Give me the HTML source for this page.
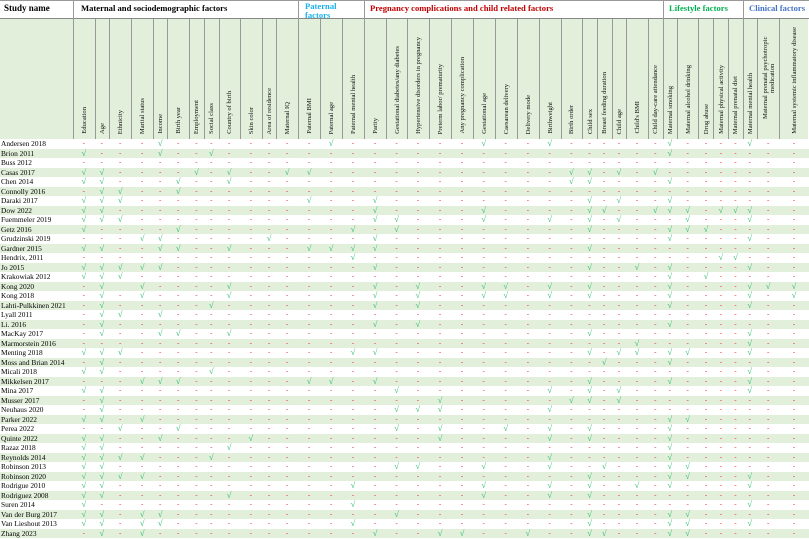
<!DOCTYPE html>
<html><head><meta charset="utf-8">
<style>
*{margin:0;padding:0;box-sizing:border-box}
body{width:809px;height:539px;overflow:hidden;background:#fff;font-family:"Liberation Serif",serif;position:relative;color:#000}
.top{position:absolute;left:0;top:0;width:809px;height:19px;border-top:1px solid #999;border-bottom:1px solid #888}
.g{position:absolute;top:1px;font-weight:bold;font-size:8.6px;line-height:8.6px}
.vl{position:absolute;top:0;width:1px;height:19px;background:#999}
.cols{position:absolute;left:0;top:19px;height:120px;width:809px}
.grid{display:grid;grid-template-columns:73px 21.7px 14.3px 22.4px 21.6px 14.4px 21.6px 15px 14.7px 21px 22.3px 14.4px 21.6px 22.4px 21.6px 22px 22.4px 20.6px 22px 22.4px 21.6px 21.7px 22.3px 22px 21.7px 21.7px 14.6px 14.7px 14.7px 21.6px 15px 14px 21.7px 15px 14.7px 14.6px 14px 22.7px 29px}
.cols>div{background:#e2efda;border-left:1px solid #999;height:120px;display:flex;align-items:flex-end;justify-content:center;padding-bottom:5px}
.cols>div:first-child{border-left:none}
.cols span{writing-mode:vertical-rl;transform:rotate(180deg);font-size:6.6px;line-height:7px;color:#111;text-align:center;max-height:112px}
.rows{position:absolute;left:0;top:139px;width:809px}
.r{height:9.5px;font-size:7.4px;line-height:9.5px}
.r:nth-child(even){background:#e2efda}
.r>*{display:block;text-align:center;font-style:normal;font-weight:normal;text-decoration:none}
.r>p{text-align:left;padding-left:1px;white-space:nowrap}
.r>i{color:#f03030;font-size:7px}
.r>b{color:#2dbb6a;font-size:8.5px;line-height:9px}
</style></head><body>
<div class="top">
<div class="g" style="left:4px;top:3px;font-size:9px">Study name</div>
<div class="g" style="left:81px;top:3px">Maternal and sociodemographic factors</div>
<div class="g" style="left:305px;color:#1ab0ee;line-height:8.6px">Paternal<br>factors</div>
<div class="g" style="left:370px;top:3px;color:#c00000">Pregnancy complications and child related factors</div>
<div class="g" style="left:669px;top:3px;color:#00b050">Lifestyle factors</div>
<div class="g" style="left:749px;top:3px;color:#4472c4">Clinical factors</div>
<div class="vl" style="left:73px"></div><div class="vl" style="left:298px"></div><div class="vl" style="left:364px"></div><div class="vl" style="left:663px"></div><div class="vl" style="left:743px"></div>
</div>
<div class="cols grid">
<div></div>
<div><span>Education</span></div><div><span>Age</span></div><div><span>Ethnicity</span></div><div><span>Marital status</span></div><div><span>Income</span></div><div><span>Birth year</span></div><div><span>Employment</span></div><div><span>Social class</span></div><div><span>Country of birth</span></div><div><span>Skin color</span></div><div><span>Area of residence</span></div><div><span>Maternal IQ</span></div><div><span>Paternal BMI</span></div><div><span>Paternal age</span></div><div><span>Paternal mental health</span></div><div><span>Parity</span></div><div><span>Gestational diabetes/any diabetes</span></div><div><span>Hypertensive disorders in pregnancy</span></div><div><span>Preterm labor/ prematurity</span></div><div><span>Any pregnancy complication</span></div><div><span>Gestational age</span></div><div><span>Caesarean delivery</span></div><div><span>Delivery mode</span></div><div><span>Birthweight</span></div><div><span>Birth order</span></div><div><span>Child sex</span></div><div><span>Breast feeding duration</span></div><div><span>Child age</span></div><div><span>Child's BMI</span></div><div><span>Child day-care attendance</span></div><div><span>Maternal smoking</span></div><div><span>Maternal alcohol drinking</span></div><div><span>Drug abuse</span></div><div><span>Maternal physical activity</span></div><div><span>Maternal prenatal diet</span></div><div><span>Maternal mental health</span></div><div><span>Maternal prenatal psychotropic medication</span></div><div><span>Maternal systemic inflammatory disease</span></div>
</div>
<div class="rows">
<div class="r grid"><p>Andersen 2018</p><i>-</i><i>-</i><i>-</i><i>-</i><b>√</b><i>-</i><i>-</i><i>-</i><i>-</i><i>-</i><i>-</i><i>-</i><i>-</i><b>√</b><i>-</i><i>-</i><i>-</i><i>-</i><i>-</i><i>-</i><b>√</b><i>-</i><i>-</i><b>√</b><i>-</i><i>-</i><i>-</i><i>-</i><i>-</i><i>-</i><b>√</b><i>-</i><i>-</i><i>-</i><i>-</i><b>√</b><i>-</i><i>-</i></div>
<div class="r grid"><p>Brion 2011</p><b>√</b><i>-</i><i>-</i><i>-</i><b>√</b><i>-</i><i>-</i><b>√</b><i>-</i><i>-</i><i>-</i><i>-</i><i>-</i><i>-</i><i>-</i><i>-</i><i>-</i><i>-</i><i>-</i><i>-</i><i>-</i><i>-</i><i>-</i><i>-</i><i>-</i><i>-</i><i>-</i><i>-</i><i>-</i><i>-</i><b>√</b><i>-</i><i>-</i><i>-</i><i>-</i><i>-</i><i>-</i><i>-</i></div>
<div class="r grid"><p>Buss 2012</p><i>-</i><i>-</i><i>-</i><i>-</i><i>-</i><i>-</i><i>-</i><i>-</i><i>-</i><i>-</i><i>-</i><i>-</i><i>-</i><i>-</i><i>-</i><i>-</i><i>-</i><i>-</i><i>-</i><i>-</i><i>-</i><i>-</i><i>-</i><i>-</i><i>-</i><i>-</i><i>-</i><i>-</i><i>-</i><i>-</i><i>-</i><i>-</i><i>-</i><i>-</i><i>-</i><i>-</i><i>-</i><i>-</i></div>
<div class="r grid"><p>Casas 2017</p><b>√</b><b>√</b><i>-</i><i>-</i><i>-</i><i>-</i><b>√</b><i>-</i><b>√</b><i>-</i><i>-</i><b>√</b><b>√</b><i>-</i><i>-</i><i>-</i><i>-</i><i>-</i><i>-</i><i>-</i><i>-</i><i>-</i><i>-</i><i>-</i><b>√</b><b>√</b><i>-</i><b>√</b><i>-</i><b>√</b><i>-</i><i>-</i><i>-</i><i>-</i><i>-</i><i>-</i><i>-</i><i>-</i></div>
<div class="r grid"><p>Chen 2014</p><b>√</b><b>√</b><i>-</i><i>-</i><i>-</i><b>√</b><i>-</i><i>-</i><b>√</b><i>-</i><i>-</i><i>-</i><i>-</i><i>-</i><i>-</i><i>-</i><i>-</i><i>-</i><i>-</i><i>-</i><i>-</i><i>-</i><i>-</i><i>-</i><b>√</b><b>√</b><i>-</i><i>-</i><i>-</i><i>-</i><b>√</b><i>-</i><i>-</i><i>-</i><i>-</i><i>-</i><i>-</i><i>-</i></div>
<div class="r grid"><p>Connolly 2016</p><i>-</i><b>√</b><b>√</b><i>-</i><i>-</i><b>√</b><i>-</i><i>-</i><i>-</i><i>-</i><i>-</i><i>-</i><i>-</i><i>-</i><i>-</i><i>-</i><i>-</i><i>-</i><i>-</i><i>-</i><i>-</i><i>-</i><i>-</i><i>-</i><i>-</i><i>-</i><i>-</i><i>-</i><i>-</i><i>-</i><i>-</i><i>-</i><i>-</i><i>-</i><i>-</i><i>-</i><i>-</i><i>-</i></div>
<div class="r grid"><p>Daraki 2017</p><b>√</b><b>√</b><b>√</b><i>-</i><i>-</i><i>-</i><i>-</i><i>-</i><i>-</i><i>-</i><i>-</i><i>-</i><b>√</b><i>-</i><i>-</i><b>√</b><i>-</i><i>-</i><i>-</i><i>-</i><i>-</i><i>-</i><i>-</i><i>-</i><i>-</i><b>√</b><i>-</i><b>√</b><i>-</i><i>-</i><b>√</b><i>-</i><i>-</i><i>-</i><i>-</i><i>-</i><i>-</i><i>-</i></div>
<div class="r grid"><p>Dow 2022</p><b>√</b><b>√</b><i>-</i><i>-</i><i>-</i><i>-</i><i>-</i><i>-</i><i>-</i><i>-</i><i>-</i><i>-</i><i>-</i><i>-</i><i>-</i><b>√</b><i>-</i><i>-</i><i>-</i><i>-</i><b>√</b><i>-</i><i>-</i><i>-</i><i>-</i><b>√</b><b>√</b><i>-</i><i>-</i><b>√</b><b>√</b><b>√</b><i>-</i><b>√</b><b>√</b><b>√</b><i>-</i><i>-</i></div>
<div class="r grid"><p>Fuemmeler 2019</p><b>√</b><b>√</b><b>√</b><i>-</i><i>-</i><i>-</i><i>-</i><i>-</i><i>-</i><i>-</i><i>-</i><i>-</i><i>-</i><i>-</i><i>-</i><b>√</b><b>√</b><i>-</i><i>-</i><i>-</i><b>√</b><i>-</i><i>-</i><b>√</b><i>-</i><b>√</b><i>-</i><b>√</b><i>-</i><i>-</i><i>-</i><b>√</b><i>-</i><i>-</i><i>-</i><b>√</b><i>-</i><i>-</i></div>
<div class="r grid"><p>Getz 2016</p><b>√</b><i>-</i><i>-</i><i>-</i><i>-</i><b>√</b><i>-</i><i>-</i><i>-</i><i>-</i><i>-</i><i>-</i><i>-</i><i>-</i><b>√</b><i>-</i><b>√</b><i>-</i><i>-</i><i>-</i><i>-</i><i>-</i><i>-</i><i>-</i><i>-</i><b>√</b><i>-</i><i>-</i><i>-</i><i>-</i><b>√</b><b>√</b><b>√</b><i>-</i><i>-</i><i>-</i><i>-</i><i>-</i></div>
<div class="r grid"><p>Grudzinski 2019</p><i>-</i><i>-</i><i>-</i><b>√</b><b>√</b><i>-</i><i>-</i><i>-</i><i>-</i><i>-</i><b>√</b><i>-</i><i>-</i><i>-</i><i>-</i><b>√</b><i>-</i><i>-</i><i>-</i><i>-</i><i>-</i><i>-</i><i>-</i><i>-</i><i>-</i><i>-</i><i>-</i><i>-</i><i>-</i><i>-</i><b>√</b><i>-</i><i>-</i><i>-</i><i>-</i><b>√</b><i>-</i><i>-</i></div>
<div class="r grid"><p>Gardner 2015</p><b>√</b><b>√</b><i>-</i><i>-</i><b>√</b><b>√</b><i>-</i><i>-</i><b>√</b><i>-</i><i>-</i><i>-</i><b>√</b><b>√</b><b>√</b><b>√</b><i>-</i><i>-</i><i>-</i><i>-</i><i>-</i><i>-</i><i>-</i><i>-</i><i>-</i><b>√</b><i>-</i><i>-</i><i>-</i><i>-</i><i>-</i><i>-</i><i>-</i><i>-</i><i>-</i><i>-</i><i>-</i><i>-</i></div>
<div class="r grid"><p>Hendrix, 2011</p><i>-</i><i>-</i><i>-</i><i>-</i><i>-</i><i>-</i><i>-</i><i>-</i><i>-</i><i>-</i><i>-</i><i>-</i><i>-</i><i>-</i><b>√</b><i>-</i><i>-</i><i>-</i><i>-</i><i>-</i><i>-</i><i>-</i><i>-</i><i>-</i><i>-</i><i>-</i><i>-</i><i>-</i><i>-</i><i>-</i><i>-</i><i>-</i><i>-</i><b>√</b><b>√</b><i>-</i><i>-</i><i>-</i></div>
<div class="r grid"><p>Jo 2015</p><b>√</b><b>√</b><b>√</b><b>√</b><b>√</b><i>-</i><i>-</i><i>-</i><i>-</i><i>-</i><i>-</i><i>-</i><i>-</i><i>-</i><i>-</i><b>√</b><i>-</i><i>-</i><i>-</i><i>-</i><i>-</i><i>-</i><i>-</i><i>-</i><i>-</i><b>√</b><i>-</i><i>-</i><b>√</b><i>-</i><b>√</b><i>-</i><i>-</i><i>-</i><i>-</i><b>√</b><i>-</i><i>-</i></div>
<div class="r grid"><p>Krakowiak 2012</p><b>√</b><b>√</b><b>√</b><i>-</i><i>-</i><i>-</i><i>-</i><i>-</i><i>-</i><i>-</i><i>-</i><i>-</i><i>-</i><i>-</i><i>-</i><i>-</i><i>-</i><i>-</i><i>-</i><i>-</i><i>-</i><i>-</i><i>-</i><i>-</i><i>-</i><i>-</i><i>-</i><i>-</i><i>-</i><i>-</i><b>√</b><i>-</i><b>√</b><i>-</i><i>-</i><i>-</i><i>-</i><i>-</i></div>
<div class="r grid"><p>Kong 2020</p><i>-</i><b>√</b><i></i><b>√</b><i>-</i><i>-</i><i>-</i><i>-</i><b>√</b><i>-</i><i>-</i><i>-</i><i>-</i><i>-</i><i>-</i><b>√</b><i>-</i><b>√</b><i>-</i><i>-</i><b>√</b><b>√</b><i>-</i><b>√</b><i>-</i><b>√</b><i>-</i><i>-</i><i>-</i><i>-</i><b>√</b><i>-</i><i>-</i><i>-</i><i>-</i><b>√</b><b>√</b><b>√</b></div>
<div class="r grid"><p>Kong 2018</p><i>-</i><b>√</b><i>-</i><b>√</b><i>-</i><i>-</i><i>-</i><i>-</i><b>√</b><i>-</i><i>-</i><i>-</i><i>-</i><i>-</i><i>-</i><b>√</b><i>-</i><b>√</b><i>-</i><i>-</i><b>√</b><b>√</b><i>-</i><b>√</b><i>-</i><b>√</b><i>-</i><i>-</i><i>-</i><i>-</i><b>√</b><i>-</i><i>-</i><i>-</i><i>-</i><b>√</b><i>-</i><b>√</b></div>
<div class="r grid"><p>Lahti-Pulkkinen 2021</p><i>-</i><b>√</b><i>-</i><i>-</i><i>-</i><i>-</i><i>-</i><b>√</b><i>-</i><i>-</i><i>-</i><i>-</i><i>-</i><i>-</i><i>-</i><b>√</b><i>-</i><b>√</b><i>-</i><i>-</i><i>-</i><i>-</i><i>-</i><i>-</i><i>-</i><i>-</i><i>-</i><i>-</i><i>-</i><i>-</i><b>√</b><i>-</i><i>-</i><i>-</i><i>-</i><b>√</b><i>-</i><i>-</i></div>
<div class="r grid"><p>Lyall 2011</p><i>-</i><b>√</b><b>√</b><i>-</i><b>√</b><i>-</i><i>-</i><i>-</i><i>-</i><i>-</i><i>-</i><i>-</i><i>-</i><i>-</i><i>-</i><i>-</i><i>-</i><i>-</i><i>-</i><i>-</i><i>-</i><i>-</i><i>-</i><i>-</i><i>-</i><i>-</i><i>-</i><i>-</i><i>-</i><i>-</i><i>-</i><i>-</i><i>-</i><i>-</i><i>-</i><i>-</i><i>-</i><i>-</i></div>
<div class="r grid"><p>Li. 2016</p><i>-</i><b>√</b><i>-</i><i>-</i><i>-</i><i>-</i><i>-</i><i>-</i><i>-</i><i>-</i><i>-</i><i>-</i><i>-</i><i>-</i><i>-</i><b>√</b><i>-</i><b>√</b><i>-</i><i>-</i><i>-</i><i>-</i><i>-</i><i>-</i><i>-</i><i>-</i><i>-</i><i>-</i><i>-</i><i>-</i><b>√</b><i>-</i><i>-</i><i>-</i><i>-</i><i>-</i><i>-</i><i>-</i></div>
<div class="r grid"><p>MacKay 2017</p><i>-</i><b>√</b><i>-</i><i>-</i><b>√</b><b>√</b><i>-</i><i>-</i><b>√</b><i>-</i><i>-</i><i>-</i><i>-</i><i>-</i><i>-</i><i>-</i><i>-</i><i>-</i><i>-</i><i>-</i><i>-</i><i>-</i><i>-</i><i>-</i><i>-</i><b>√</b><i>-</i><i>-</i><i>-</i><i>-</i><i>-</i><i>-</i><i>-</i><i>-</i><i>-</i><b>√</b><i>-</i><i>-</i></div>
<div class="r grid"><p>Marmorstein 2016</p><i>-</i><i>-</i><i>-</i><i>-</i><i>-</i><i>-</i><i>-</i><i>-</i><i>-</i><i>-</i><i>-</i><i>-</i><i>-</i><i>-</i><i>-</i><i>-</i><i>-</i><i>-</i><i>-</i><i>-</i><i>-</i><i>-</i><i>-</i><i>-</i><i>-</i><i>-</i><i>-</i><i>-</i><b>√</b><i>-</i><i>-</i><i>-</i><i>-</i><i>-</i><i>-</i><b>√</b><i>-</i><i>-</i></div>
<div class="r grid"><p>Menting 2018</p><b>√</b><b>√</b><b>√</b><i>-</i><i>-</i><i>-</i><i>-</i><i>-</i><i>-</i><i>-</i><i>-</i><i>-</i><i>-</i><i>-</i><b>√</b><b>√</b><i>-</i><i>-</i><i>-</i><i>-</i><i>-</i><i>-</i><i>-</i><i>-</i><i>-</i><b>√</b><i>-</i><b>√</b><b>√</b><i>-</i><b>√</b><b>√</b><i>-</i><i>-</i><i>-</i><b>√</b><i>-</i><i>-</i></div>
<div class="r grid"><p>Moss and Brian 2014</p><i>-</i><b>√</b><i>-</i><i>-</i><i>-</i><i>-</i><i>-</i><i>-</i><i>-</i><i>-</i><i>-</i><i>-</i><i>-</i><i>-</i><i>-</i><i>-</i><i>-</i><i>-</i><i>-</i><i>-</i><i>-</i><i>-</i><i>-</i><i>-</i><i>-</i><i>-</i><b>√</b><i>-</i><i>-</i><i>-</i><b>√</b><i>-</i><i>-</i><i>-</i><i>-</i><i>-</i><i>-</i><i>-</i></div>
<div class="r grid"><p>Micali 2018</p><b>√</b><b>√</b><i>-</i><i>-</i><i>-</i><i>-</i><i>-</i><b>√</b><i>-</i><i>-</i><i>-</i><i>-</i><i>-</i><i>-</i><i>-</i><i>-</i><i>-</i><i>-</i><i>-</i><i>-</i><i>-</i><i>-</i><i>-</i><i>-</i><i>-</i><i>-</i><i>-</i><i>-</i><i>-</i><i>-</i><i>-</i><i>-</i><i>-</i><i>-</i><i>-</i><b>√</b><i>-</i><i>-</i></div>
<div class="r grid"><p>Mikkelsen 2017</p><i>-</i><i>-</i><i>-</i><b>√</b><b>√</b><b>√</b><i>-</i><i>-</i><i>-</i><i>-</i><i>-</i><i>-</i><b>√</b><b>√</b><i>-</i><b>√</b><i>-</i><i>-</i><i>-</i><i>-</i><i>-</i><i>-</i><i>-</i><i>-</i><i>-</i><b>√</b><i>-</i><i>-</i><i>-</i><i>-</i><b>√</b><i>-</i><i>-</i><i>-</i><i>-</i><b>√</b><i>-</i><i>-</i></div>
<div class="r grid"><p>Mina 2017</p><b>√</b><b>√</b><i>-</i><i>-</i><i>-</i><i>-</i><i>-</i><i>-</i><i>-</i><i>-</i><i>-</i><i>-</i><i>-</i><i>-</i><i>-</i><i>-</i><b>√</b><i>-</i><i>-</i><i>-</i><i>-</i><i>-</i><i>-</i><b>√</b><i>-</i><b>√</b><i>-</i><b>√</b><i>-</i><i>-</i><i>-</i><i>-</i><i>-</i><i>-</i><i>-</i><b>√</b><i>-</i><i>-</i></div>
<div class="r grid"><p>Musser 2017</p><i>-</i><b>√</b><i>-</i><i>-</i><i>-</i><i>-</i><i>-</i><i>-</i><i>-</i><i>-</i><i>-</i><i>-</i><i>-</i><i>-</i><i>-</i><i>-</i><i>-</i><i>-</i><b>√</b><i>-</i><i>-</i><i>-</i><i>-</i><i>-</i><b>√</b><b>√</b><i>-</i><b>√</b><i>-</i><i>-</i><i>-</i><i>-</i><i>-</i><i>-</i><i>-</i><i>-</i><i>-</i><i>-</i></div>
<div class="r grid"><p>Neuhaus 2020</p><i>-</i><b>√</b><i>-</i><i>-</i><i>-</i><i>-</i><i>-</i><i>-</i><i>-</i><i>-</i><i>-</i><i>-</i><i>-</i><i>-</i><i>-</i><i>-</i><b>√</b><b>√</b><b>√</b><i>-</i><i>-</i><i>-</i><i>-</i><b>√</b><i>-</i><i>-</i><i>-</i><i>-</i><i>-</i><i>-</i><i>-</i><i>-</i><i>-</i><i>-</i><i>-</i><i>-</i><i>-</i><i>-</i></div>
<div class="r grid"><p>Parker 2022</p><b>√</b><b>√</b><i>-</i><b>√</b><i>-</i><i>-</i><i>-</i><i>-</i><i>-</i><i>-</i><i>-</i><i>-</i><i>-</i><i>-</i><i>-</i><i>-</i><i>-</i><i>-</i><i>-</i><i>-</i><i>-</i><i>-</i><i>-</i><i>-</i><i>-</i><i>-</i><i>-</i><i>-</i><i>-</i><i>-</i><b>√</b><b>√</b><i>-</i><i>-</i><i>-</i><i>-</i><i>-</i><i>-</i></div>
<div class="r grid"><p>Perea 2022</p><i>-</i><i>-</i><b>√</b><i>-</i><i>-</i><b>√</b><i>-</i><i>-</i><i>-</i><i>-</i><i>-</i><i>-</i><i>-</i><i>-</i><i>-</i><i>-</i><b>√</b><i>-</i><b>√</b><i>-</i><i>-</i><b>√</b><i>-</i><b>√</b><i>-</i><b>√</b><i>-</i><i>-</i><i>-</i><i>-</i><b>√</b><i>-</i><i>-</i><i>-</i><i>-</i><i>-</i><i>-</i><i>-</i></div>
<div class="r grid"><p>Quinte 2022</p><b>√</b><b>√</b><i>-</i><i>-</i><b>√</b><i>-</i><i>-</i><i>-</i><i>-</i><b>√</b><i>-</i><i>-</i><i>-</i><i>-</i><i>-</i><i>-</i><i>-</i><i>-</i><b>√</b><i>-</i><i>-</i><i>-</i><i>-</i><b>√</b><i>-</i><b>√</b><i>-</i><i>-</i><i>-</i><i>-</i><b>√</b><i>-</i><i>-</i><i>-</i><i>-</i><i>-</i><i>-</i><i>-</i></div>
<div class="r grid"><p>Razaz 2018</p><b>√</b><b>√</b><i>-</i><i>-</i><i>-</i><i>-</i><i>-</i><i>-</i><b>√</b><i>-</i><i>-</i><i>-</i><i>-</i><i>-</i><i>-</i><i>-</i><i>-</i><i>-</i><i>-</i><i>-</i><i>-</i><i>-</i><i>-</i><i>-</i><i>-</i><i>-</i><i>-</i><i>-</i><i>-</i><i>-</i><b>√</b><i>-</i><i>-</i><i>-</i><i>-</i><i>-</i><i>-</i><i>-</i></div>
<div class="r grid"><p>Reynolds 2014</p><b>√</b><b>√</b><b>√</b><b>√</b><i>-</i><i>-</i><i>-</i><b>√</b><i>-</i><i>-</i><i>-</i><i>-</i><i>-</i><i>-</i><i>-</i><i>-</i><i>-</i><i>-</i><i>-</i><i>-</i><i>-</i><i>-</i><i>-</i><b>√</b><i>-</i><i>-</i><i>-</i><i>-</i><i>-</i><i>-</i><b>√</b><i>-</i><i>-</i><i>-</i><i>-</i><i>-</i><i>-</i><i>-</i></div>
<div class="r grid"><p>Robinson 2013</p><b>√</b><b>√</b><i>-</i><i>-</i><i>-</i><i>-</i><i>-</i><i>-</i><i>-</i><i>-</i><i>-</i><i>-</i><i>-</i><i>-</i><i>-</i><i>-</i><b>√</b><b>√</b><i>-</i><i>-</i><b>√</b><i>-</i><i>-</i><b>√</b><i>-</i><i>-</i><b>√</b><i>-</i><i>-</i><i>-</i><b>√</b><b>√</b><i>-</i><i>-</i><i>-</i><i>-</i><i>-</i><i>-</i></div>
<div class="r grid"><p>Robinson 2020</p><b>√</b><b>√</b><b>√</b><b>√</b><i>-</i><i>-</i><i>-</i><i>-</i><i>-</i><i>-</i><i>-</i><i>-</i><i>-</i><i>-</i><i>-</i><i>-</i><i>-</i><i>-</i><i>-</i><i>-</i><i>-</i><i>-</i><i>-</i><i>-</i><i>-</i><b>√</b><i>-</i><i>-</i><i>-</i><i>-</i><b>√</b><b>√</b><i>-</i><i>-</i><i>-</i><b>√</b><i>-</i><i>-</i></div>
<div class="r grid"><p>Rodrigue 2010</p><b>√</b><b>√</b><i>-</i><i>-</i><i>-</i><i>-</i><i>-</i><i>-</i><i>-</i><i>-</i><i>-</i><i>-</i><i>-</i><i>-</i><b>√</b><i>-</i><i>-</i><i>-</i><i>-</i><i>-</i><b>√</b><i>-</i><i>-</i><b>√</b><i>-</i><b>√</b><i>-</i><i>-</i><b>√</b><i>-</i><b>√</b><i>-</i><i>-</i><i>-</i><i>-</i><b>√</b><i>-</i><i>-</i></div>
<div class="r grid"><p>Rodriguez 2008</p><b>√</b><b>√</b><i>-</i><i>-</i><i>-</i><i>-</i><i>-</i><i>-</i><b>√</b><i>-</i><i>-</i><i>-</i><i>-</i><i>-</i><i>-</i><i>-</i><i>-</i><i>-</i><i>-</i><i>-</i><b>√</b><i>-</i><i>-</i><b>√</b><i>-</i><b>√</b><i>-</i><i>-</i><i>-</i><i>-</i><i>-</i><i>-</i><i>-</i><i>-</i><i>-</i><i>-</i><i>-</i><i>-</i></div>
<div class="r grid"><p>Suren 2014</p><b>√</b><i>-</i><i>-</i><i>-</i><i>-</i><i>-</i><i>-</i><i>-</i><i>-</i><i>-</i><i>-</i><i>-</i><i>-</i><i>-</i><b>√</b><i>-</i><i>-</i><i>-</i><i>-</i><i>-</i><i>-</i><i>-</i><i>-</i><i>-</i><i>-</i><i>-</i><i>-</i><i>-</i><i>-</i><i>-</i><i>-</i><i>-</i><i>-</i><i>-</i><i>-</i><b>√</b><i>-</i><i>-</i></div>
<div class="r grid"><p>Van der Burg 2017</p><b>√</b><b>√</b><i>-</i><b>√</b><b>√</b><i>-</i><i>-</i><i>-</i><i>-</i><i>-</i><i>-</i><i>-</i><i>-</i><i>-</i><i>-</i><i>-</i><b>√</b><i>-</i><i>-</i><i>-</i><i>-</i><i>-</i><i>-</i><i>-</i><i>-</i><b>√</b><i>-</i><i>-</i><i>-</i><i>-</i><b>√</b><b>√</b><i>-</i><i>-</i><i>-</i><i>-</i><i>-</i><i>-</i></div>
<div class="r grid"><p>Van Lieshout 2013</p><b>√</b><b>√</b><i>-</i><b>√</b><b>√</b><i>-</i><i>-</i><i>-</i><i>-</i><i>-</i><i>-</i><i>-</i><i>-</i><i>-</i><b>√</b><i>-</i><i>-</i><i>-</i><i>-</i><i>-</i><i>-</i><i>-</i><i>-</i><i>-</i><i>-</i><b>√</b><i>-</i><i>-</i><i>-</i><i>-</i><b>√</b><b>√</b><i>-</i><i>-</i><i>-</i><b>√</b><i>-</i><i>-</i></div>
<div class="r grid"><p>Zhang 2023</p><i>-</i><b>√</b><i>-</i><b>√</b><i>-</i><i>-</i><i>-</i><i>-</i><i>-</i><i>-</i><i>-</i><i>-</i><i>-</i><i>-</i><i>-</i><b>√</b><i>-</i><i>-</i><b>√</b><b>√</b><i>-</i><i>-</i><b>√</b><i>-</i><i>-</i><b>√</b><b>√</b><i>-</i><i>-</i><i>-</i><b>√</b><b>√</b><i>-</i><i>-</i><i>-</i><i>-</i><i>-</i><i>-</i></div>
</div>
</body></html>
